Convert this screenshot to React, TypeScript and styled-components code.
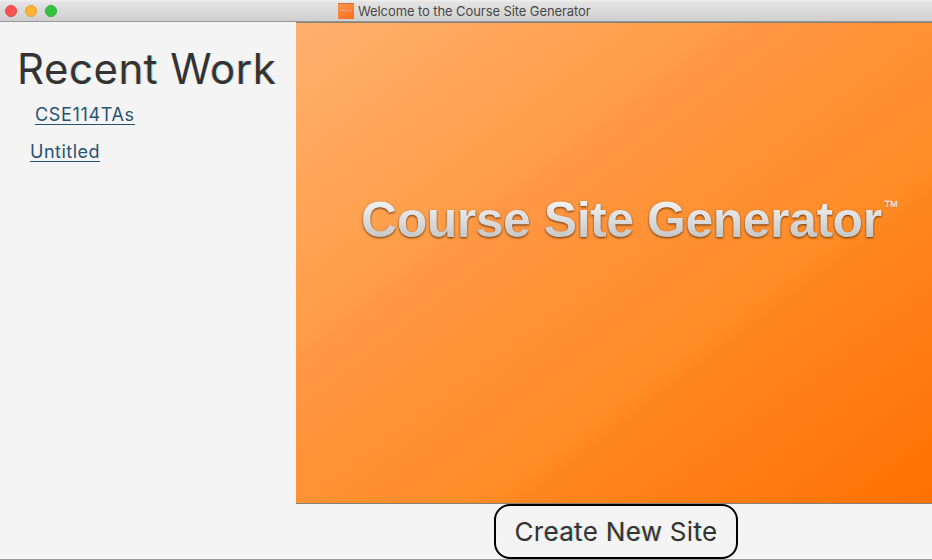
import React from "react";
import styled, { createGlobalStyle } from "styled-components";

const GlobalStyle = createGlobalStyle`
  * { box-sizing: border-box; }
  body { margin: 0; background: #f4f4f4; overflow: hidden; }
`;

const Window = styled.div`
  width: 932px;
  height: 560px;
  display: flex;
  flex-direction: column;
  background: #f4f4f4;
  border-bottom: 1px solid #999;
  font-family: Inter, "Liberation Sans", sans-serif;
  color: #333;
`;

const TitleBar = styled.header`
  height: 22px;
  flex: none;
  display: grid;
  grid-template-columns: 338px auto 1fr;
  background: linear-gradient(#f0f0f0 0, #e4e4e4 2px, #d0d0d0 20px);
  border-bottom: 1px solid #969696;
`;

const Lights = styled.div`
  display: flex;
  gap: 8px;
  padding: 5px 0 0 5px;
`;

const Light = styled.span<{ $fill: string; $edge: string }>`
  width: 12px;
  height: 12px;
  border-radius: 50%;
  background: ${(p) => p.$fill};
  border: 1px solid ${(p) => p.$edge};
`;

const Title = styled.div`
  display: flex;
  gap: 4px;
  padding-top: 3px;
  font-size: 13px;
  line-height: 17px;
  letter-spacing: -0.09px;
  color: #484848;
  white-space: nowrap;
`;

const AppIcon = styled.span`
  width: 16px;
  height: 16px;
  background:
    linear-gradient(#e0a184, #e0a184) 2px 6px / 12px 1px no-repeat,
    linear-gradient(150deg, #ff9849, #ff681d);
  border-top: 1px solid #c8743c;
`;

const Body = styled.main`
  flex: 1;
  display: grid;
  grid-template-columns: 296px 1fr;
`;

const Sidebar = styled.aside`
  display: flex;
  flex-direction: column;
  align-items: flex-start;
`;

const Heading = styled.h1`
  margin: 21px 0 0 17px;
  font-size: 42px;
  font-weight: 400;
  line-height: 52px;
  letter-spacing: 0.5px;
  white-space: nowrap;
`;

/* Subpixel colour edges: left and right tint of a glyph. */
const Fringe = styled.span<{ $warm?: boolean }>`
  text-shadow: ${(p) =>
    p.$warm
      ? "-1px 0 0 rgba(244, 244, 0, 0.4), 1px 0 0 rgba(80, 80, 255, 0.3)"
      : "-1px 0 0 rgba(255, 70, 70, 0.3), 1px 0 0 rgba(0, 244, 244, 0.45)"};
`;

const WorkLink = styled.a<{ $indent: number; $top: number; $spacing: number }>`
  margin: ${(p) => p.$top}px 0 0 ${(p) => p.$indent}px;
  height: 21px;
  font-size: 18px;
  line-height: 22px;
  letter-spacing: ${(p) => p.$spacing}px;
  color: #265372;
  border-bottom: 1px solid #265372;
  white-space: nowrap;
`;

const Content = styled.section`
  display: flex;
  flex-direction: column;
  align-items: center;
`;

const Banner = styled.div`
  width: 636px;
  height: 482px;
  flex: none;
  display: flex;
  align-items: flex-start;
  padding: 168px 0 0 65px;
  background: linear-gradient(to bottom right, #ffb06e 0%, #ff9d47 33%, #ff9744 35.5%, #ff8c25 65%, #ff861f 67.5%, #ff7a10 86%, #ff7000 100%);
  border-top: 1px solid #858078;
  border-bottom: 1px solid #858078;
  font-family: "Liberation Sans", Arial, sans-serif;
  white-space: nowrap;
`;

const Wordmark = styled.div`
  font-size: 50px;
  font-weight: 700;
  line-height: 58px;
  letter-spacing: -0.48px;
  color: transparent;
  background: linear-gradient(#f4f4f4 16%, #c4c4c4 84%);
  background-clip: text;
  filter: drop-shadow(0 1px 1px rgba(70, 35, 5, 0.85));
`;

const Trademark = styled.span`
  margin: 7px 0 0 3px;
  font-size: 9px;
  line-height: 12px;
  color: #f0ebe6;
  -webkit-text-stroke: 0.3px #f0ebe6;
  text-shadow: 0 1px 1px rgba(90, 45, 5, 0.6);
`;

const CreateButton = styled.button`
  width: 244px;
  height: 55px;
  margin: 0 0 0 4px;
  padding: 0;
  border: 2px solid #000;
  border-radius: 16px;
  background: #f4f4f4;
  color: #333;
  font: 400 26px/51px Inter, sans-serif;
  letter-spacing: 0.3px;
  white-space: nowrap;
`;

export default function App() {
  return (
    <>
      <GlobalStyle />
      <Window>
        <TitleBar>
          <Lights>
            <Light $fill="#ff5052" $edge="#e34547" />
            <Light $fill="#ffb235" $edge="#dfa033" />
            <Light $fill="#35c344" $edge="#2fae38" />
          </Lights>
          <Title>
            <AppIcon />
            <span>Welcome to the Course Site Generator</span>
          </Title>
        </TitleBar>
        <Body>
          <Sidebar>
            <Heading>
              Re<Fringe>c</Fringe>e<Fringe $warm>n</Fringe><Fringe>t</Fringe> W<Fringe>or</Fringe><Fringe $warm>k</Fringe>
            </Heading>
            <WorkLink $indent={35} $top={9} $spacing={0.65}>CSE114TAs</WorkLink>
            <WorkLink $indent={30} $top={16} $spacing={0.5}>Untitled</WorkLink>
          </Sidebar>
          <Content>
            <Banner>
              <Wordmark>Course Site Generator</Wordmark>
              <Trademark>TM</Trademark>
            </Banner>
            <CreateButton>
              Cr<Fringe>eat</Fringe>e <Fringe $warm>N</Fringe><Fringe>e</Fringe><Fringe $warm>w</Fringe> Si<Fringe>t</Fringe>e
            </CreateButton>
          </Content>
        </Body>
      </Window>
    </>
  );
}
